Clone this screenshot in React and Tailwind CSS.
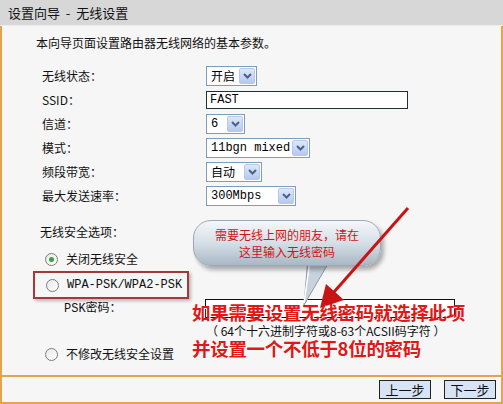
import React from 'react';

const cjk = "font-['Noto_Sans_CJK_SC',sans-serif]";
const mono = "font-['Liberation_Mono','Noto_Sans_CJK_SC',monospace]";

function Arrow() {
  return (
    <span className="ml-auto mr-[1px] flex h-[16px] w-[16px] items-center justify-center rounded-[2px] border border-[#b8c8e8] bg-gradient-to-b from-[#dde8fc] to-[#b4c8f0]">
      <svg width="9" height="6" viewBox="0 0 9 6">
        <path d="M1 1 L4.5 4.5 L8 1" stroke="#4d6185" strokeWidth="2" fill="none" />
      </svg>
    </span>
  );
}

function Select({ value, width, isMono }) {
  return (
    <div
      className={`flex h-[20px] items-center border border-[#7f9db9] bg-white pl-[4px] text-[12px] leading-none text-black ${width} ${isMono ? mono : cjk}`}
    >
      <span>{value}</span>
      <Arrow />
    </div>
  );
}

function Row({ label, children }) {
  return (
    <div className="flex h-[24px] items-center">
      <div className="w-[204px] shrink-0 pl-[40px] text-[12px] text-[#111]">{label}</div>
      {children}
    </div>
  );
}

function Radio({ checked }) {
  return (
    <span className="flex h-[13px] w-[13px] items-center justify-center rounded-full border border-[#7a7a7a] bg-gradient-to-br from-[#e8e8e8] to-white">
      {checked && <span className="h-[5px] w-[5px] rounded-full bg-[#3ca03c]" />}
    </span>
  );
}

export default function App() {
  return (
    <div className={`relative h-[404px] w-[503px] overflow-hidden bg-[#f6f6f6] ${cjk}`}>
      {/* Title */}
      <div className="flex h-[26px] items-center border-b border-[#ececec] bg-[#d7d7d7] pl-[8px] text-[13px] text-[#111]">
        设置向导&nbsp;&nbsp;-&nbsp;&nbsp;无线设置
      </div>

      {/* Body */}
      <div className="flex h-[378px] flex-col border-x-2 border-b-2 border-[#e2a54c]">
        <div className="h-[349px]">
          <div className="pt-[9px] pl-[34px] text-[12px] leading-[16px] text-[#111]">
            本向导页面设置路由器无线网络的基本参数。
          </div>

          <div className="mt-[13px]">
            <Row label="无线状态：">
              <Select value="开启" width="w-[51px]" />
            </Row>
            <Row label="SSID：">
              <div className={`flex h-[18px] w-[202px] items-center border border-[#1e3030] bg-white pl-[3px] text-[12px] ${mono}`}>
                FAST
              </div>
            </Row>
            <Row label="信道：">
              <Select value="6" width="w-[39px]" isMono />
            </Row>
            <Row label="模式：">
              <Select value="11bgn mixed" width="w-[104px]" isMono />
            </Row>
            <Row label="频段带宽：">
              <Select value="自动" width="w-[56px]" />
            </Row>
            <Row label="最大发送速率：">
              <Select value="300Mbps" width="w-[90px]" isMono />
            </Row>
          </div>

          <div className="mt-[12px] flex h-[24px] items-center pl-[38px] text-[12px] text-[#111]">无线安全选项：</div>

          <div className="mt-[3px] flex h-[24px] items-center gap-[8px] pl-[43px] text-[12px] text-[#111]">
            <Radio checked />
            <span>关闭无线安全</span>
          </div>

          <div className="ml-[31px] flex h-[28px] w-[156px] items-center gap-[8px] border-2 border-[#a33a3a] pl-[11px] text-[12px] text-[#111] shadow-[2px_2px_3px_rgba(0,0,0,0.25)]">
            <Radio />
            <span className={mono}>WPA-PSK/WPA2-PSK</span>
          </div>

          <div className="flex h-[18px] items-center">
            <div className="w-[203px] pl-[62px] text-[12px] text-[#111]">
              <span className={mono}>PSK</span>密码：
            </div>
            <div className="h-[19px] w-[250px] border border-[#111] bg-white" />
          </div>

          <div className="mt-[6px] flex h-[16px] items-center pl-[204px] text-[12px] leading-[14px] text-[#111]">
            （ 64个十六进制字符或8-63个ACSII码字符 ）
          </div>

          <div className="mt-[3px] flex h-[24px] items-center gap-[8px] pl-[43px] text-[12px] text-[#111]">
            <Radio />
            <span>不修改无线安全设置</span>
          </div>
        </div>

        {/* Footer */}
        <div className="flex flex-1 items-center justify-end gap-[13px] border-t-2 border-[#e2a54c] pr-[5px]">
          <button className="flex h-[19px] w-[52px] items-center justify-center border border-[#222] bg-[#d6e4f6] text-[13px] leading-none text-[#111]">
            上一步
          </button>
          <button className="flex h-[19px] w-[52px] items-center justify-center border border-[#222] bg-[#d6e4f6] text-[13px] leading-none text-[#111]">
            下一步
          </button>
        </div>
      </div>

      {/* Annotation: callout bubble */}
      <svg className="absolute left-[290px] top-[255px]" width="50" height="55" viewBox="0 0 50 55">
        <polygon points="18,2 42,2 14,50" fill="#c7d2dc" stroke="#8d9ca8" strokeWidth="1" />
        <line x1="20" y1="6" x2="14" y2="48" stroke="#ffffff" strokeWidth="1.5" />
      </svg>
      <div className="absolute left-[193px] top-[220px] flex h-[46px] w-[188px] flex-col items-center justify-center rounded-[18px] border border-[#9aaab6] bg-gradient-to-b from-[#f4f7fa] via-[#d6dfe7] to-[#a9b8c5] text-[12px] leading-[17px] text-[#d01515] shadow-[3px_4px_4px_rgba(0,0,0,0.3)]">
        <span>需要无线上网的朋友，请在</span>
        <span>这里输入无线密码</span>
      </div>

      {/* Annotation: red arrow */}
      <svg className="absolute left-[310px] top-[200px]" width="110" height="115" viewBox="0 0 110 115">
        <line x1="98" y1="8" x2="24" y2="92" stroke="#c81414" strokeWidth="3" />
        <polygon points="10,108 16,84 34,100" fill="#c81414" />
      </svg>

      {/* Annotation: red texts */}
      <div className="absolute left-[192px] top-[301px] text-[18.5px] font-bold leading-[22px] tracking-[-0.3px] text-[#e01818] [text-shadow:1px_1px_0_#fff]">
        如果需要设置无线密码就选择此项
      </div>
      <div className="absolute left-[192px] top-[337px] text-[18.5px] font-bold leading-[22px] tracking-[-0.3px] text-[#e01818] [text-shadow:1px_1px_0_#fff]">
        并设置一个不低于8位的密码
      </div>
    </div>
  );
}
